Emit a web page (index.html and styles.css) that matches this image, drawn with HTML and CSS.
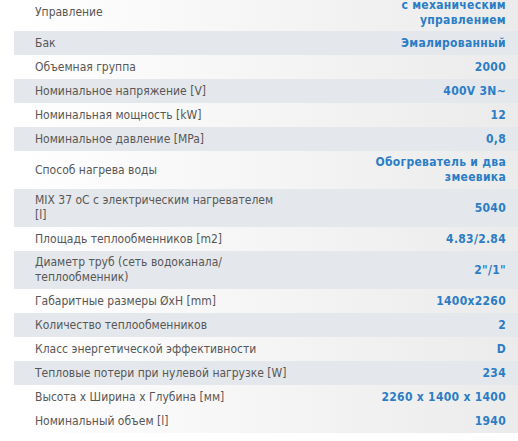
FILE: index.html
```html
<!DOCTYPE html>
<html lang="ru">
<head>
<meta charset="utf-8">
<title>Характеристики</title>
<link rel="stylesheet" href="styles.css">
</head>
<body>
<div class="specs">
  <div class="row light first"><div class="label">Управление</div><div class="value">с механическим управлением</div></div>
  <div class="row dark"><div class="label">Бак</div><div class="value">Эмалированный</div></div>
  <div class="row light"><div class="label">Объемная группа</div><div class="value">2000</div></div>
  <div class="row dark"><div class="label">Номинальное напряжение [V]</div><div class="value">400V 3N~</div></div>
  <div class="row light"><div class="label">Номинальная мощность [kW]</div><div class="value">12</div></div>
  <div class="row dark"><div class="label">Номинальное давление [MPa]</div><div class="value">0,8</div></div>
  <div class="row light"><div class="label">Способ нагрева воды</div><div class="value">Обогреватель и два змеевика</div></div>
  <div class="row dark"><div class="label">MIX 37 oC с электрическим нагревателем<br>[l]</div><div class="value">5040</div></div>
  <div class="row light"><div class="label">Площадь теплообменников [m2]</div><div class="value">4.83/2.84</div></div>
  <div class="row dark"><div class="label">Диаметр труб (сеть водоканала/ теплообменник)</div><div class="value">2"/1"</div></div>
  <div class="row light"><div class="label">Габаритные размеры ØxH [mm]</div><div class="value">1400x2260</div></div>
  <div class="row dark"><div class="label">Количество теплообменников</div><div class="value">2</div></div>
  <div class="row light"><div class="label">Класс энергетической эффективности</div><div class="value">D</div></div>
  <div class="row dark"><div class="label">Тепловые потери при нулевой нагрузке [W]</div><div class="value">234</div></div>
  <div class="row light"><div class="label">Высота x Ширина x Глубина [мм]</div><div class="value">2260 x 1400 x 1400</div></div>
  <div class="row light"><div class="label">Номинальный объем [l]</div><div class="value">1940</div></div>
</div>
</body>
</html>
```

FILE: styles.css
```css
html, body {
  margin: 0;
  padding: 0;
  background: #fff;
}
body {
  font-family: "DejaVu Sans Condensed", "DejaVu Sans", sans-serif;
  font-size: 12px;
  line-height: 15px;
}
.specs {
  margin: -7px 0 0 14px;
  padding-bottom: 8px;
}
.row {
  display: grid;
  grid-template-columns: 282px 1fr;
  align-items: center;
  min-height: 24px;
}
.row.dark {
  background: #e4e7eb;
}
.row.light {
  background: linear-gradient(to right, #ffffff, #ebebeb);
}
.label {
  padding: 4px 4px 4px 21px;
  color: #575757;
}
.value {
  padding: 4px 12px 4px 56px;
  text-align: right;
  font-weight: bold;
  letter-spacing: 0.3px;
  color: #2b7dc6;
}
.row.first .value {
  padding-top: 5px;
  padding-bottom: 3px;
}
```
